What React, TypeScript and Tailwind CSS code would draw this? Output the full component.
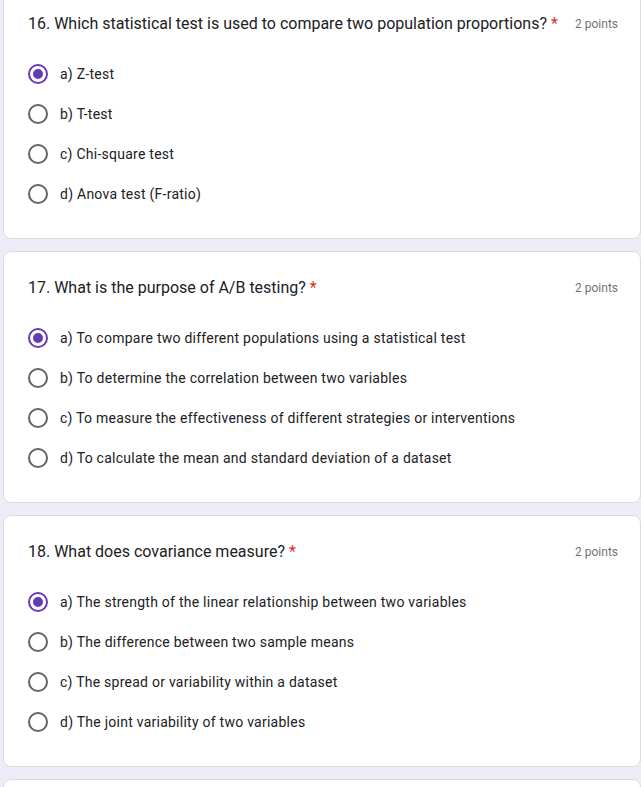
import React from 'react';

interface Question {
  num: number;
  title: string;
  options: string[];
  selected: number;
}

const questions: Question[] = [
  {
    num: 16,
    title: 'Which statistical test is used to compare two population proportions?',
    options: ['a) Z-test', 'b) T-test', 'c) Chi-square test', 'd) Anova test (F-ratio)'],
    selected: 0,
  },
  {
    num: 17,
    title: 'What is the purpose of A/B testing?',
    options: [
      'a) To compare two different populations using a statistical test',
      'b) To determine the correlation between two variables',
      'c) To measure the effectiveness of different strategies or interventions',
      'd) To calculate the mean and standard deviation of a dataset',
    ],
    selected: 0,
  },
  {
    num: 18,
    title: 'What does covariance measure?',
    options: [
      'a) The strength of the linear relationship between two variables',
      'b) The difference between two sample means',
      'c) The spread or variability within a dataset',
      'd) The joint variability of two variables',
    ],
    selected: 0,
  },
];

const Radio: React.FC<{ checked: boolean }> = ({ checked }) => (
  <div
    className={`w-5 h-5 rounded-full border-2 flex items-center justify-center shrink-0 ${
      checked ? 'border-[#673ab7]' : 'border-[#5f6368]'
    }`}
  >
    {checked && <div className="w-[10px] h-[10px] rounded-full bg-[#673ab7]" />}
  </div>
);

const QuestionCard: React.FC<{ q: Question }> = ({ q }) => (
  <div className="bg-white border border-[#dadce0] rounded-lg pl-6 pr-[22px] pt-6 pb-6">
    <div className="flex items-start justify-between gap-2">
      <div className="text-[16px] leading-6 text-[#202124] whitespace-nowrap">
        {q.num}. {q.title} <span className="text-[#d93025]">*</span>
      </div>
      <div className="text-[12px] leading-6 text-[#70757a] whitespace-nowrap">2 points</div>
    </div>
    <div className="mt-[18px] flex flex-col">
      {q.options.map((opt, i) => (
        <div key={i} className="h-10 flex items-center gap-3">
          <Radio checked={i === q.selected} />
          <span className="text-[14px] text-[#202124] tracking-[0.25px]">{opt}</span>
        </div>
      ))}
    </div>
  </div>
);

export default function App() {
  return (
    <div
      className="h-[787px] bg-[#f0ebf8] overflow-hidden pl-[3px]"
      style={{ fontFamily: 'Roboto, Arial, sans-serif' }}
    >
      <div className="-mt-[13px] flex flex-col gap-3 w-[638px]">
        {questions.map((q) => (
          <QuestionCard key={q.num} q={q} />
        ))}
        <div className="bg-white border border-[#dadce0] rounded-lg h-[252px]" />
      </div>
    </div>
  );
}
